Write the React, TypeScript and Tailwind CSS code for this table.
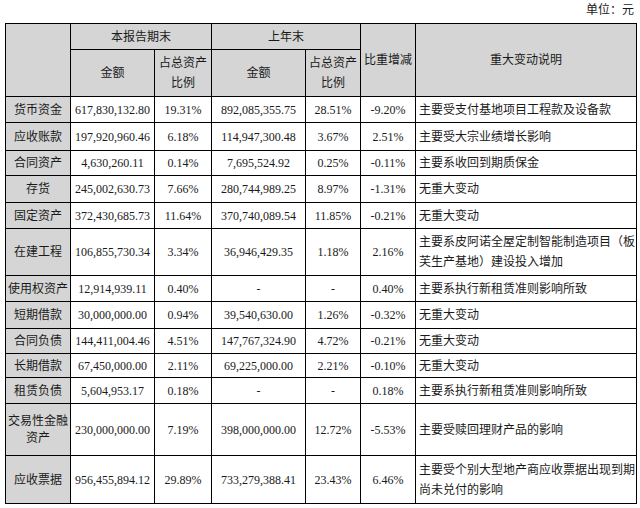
import React from "react";

type Row = { name: React.ReactNode; a: string; ap: string; b: string; bp: string; d: string; desc: React.ReactNode; h: string };

const rows: Row[] = [
  { name: "货币资金", a: "617,830,132.80", ap: "19.31%", b: "892,085,355.75", bp: "28.51%", d: "-9.20%", desc: "主要受支付基地项目工程款及设备款", h: "h-[26px]" },
  { name: "应收账款", a: "197,920,960.46", ap: "6.18%", b: "114,947,300.48", bp: "3.67%", d: "2.51%", desc: "主要受大宗业绩增长影响", h: "h-[28px]" },
  { name: "合同资产", a: "4,630,260.11", ap: "0.14%", b: "7,695,524.92", bp: "0.25%", d: "-0.11%", desc: "主要系收回到期质保金", h: "h-[25px]" },
  { name: "存货", a: "245,002,630.73", ap: "7.66%", b: "280,744,989.25", bp: "8.97%", d: "-1.31%", desc: "无重大变动", h: "h-[27px]" },
  { name: "固定资产", a: "372,430,685.73", ap: "11.64%", b: "370,740,089.54", bp: "11.85%", d: "-0.21%", desc: "无重大变动", h: "h-[26px]" },
  { name: "在建工程", a: "106,855,730.34", ap: "3.34%", b: "36,946,429.35", bp: "1.18%", d: "2.16%", desc: <>主要系皮阿诺全屋定制智能制造项目（板<br />芙生产基地）建设投入增加</>, h: "h-[47px]" },
  { name: "使用权资产", a: "12,914,939.11", ap: "0.40%", b: "-", bp: "-", d: "0.40%", desc: "主要系执行新租赁准则影响所致", h: "h-[26px]" },
  { name: "短期借款", a: "30,000,000.00", ap: "0.94%", b: "39,540,630.00", bp: "1.26%", d: "-0.32%", desc: "无重大变动", h: "h-[27px]" },
  { name: "合同负债", a: "144,411,004.46", ap: "4.51%", b: "147,767,324.90", bp: "4.72%", d: "-0.21%", desc: "无重大变动", h: "h-[25px]" },
  { name: "长期借款", a: "67,450,000.00", ap: "2.11%", b: "69,225,000.00", bp: "2.21%", d: "-0.10%", desc: "无重大变动", h: "h-[24px]" },
  { name: "租赁负债", a: "5,604,953.17", ap: "0.18%", b: "-", bp: "-", d: "0.18%", desc: "主要系执行新租赁准则影响所致", h: "h-[26px]" },
  { name: <span className="block leading-[17px]">交易性金融<br />资产</span>, a: "230,000,000.00", ap: "7.19%", b: "398,000,000.00", bp: "12.72%", d: "-5.53%", desc: "主要受赎回理财产品的影响", h: "h-[52px]" },
  { name: "应收票据", a: "956,455,894.12", ap: "29.89%", b: "733,279,388.41", bp: "23.43%", d: "6.46%", desc: <>主要受个别大型地产商应收票据出现到期<br />尚未兑付的影响</>, h: "h-[48px]" },
];

const cell = "border border-black p-0 text-center align-middle";

export default function App() {
  return (
    <div
      className="w-[640px] h-[508px] bg-white text-[12px] text-[#1a1a1a] overflow-hidden"
      style={{ fontFamily: '"Liberation Serif", "Noto Sans CJK SC", serif' }}
    >
      <div className="h-[23px] flex justify-end items-start pt-[2px] pr-[6px] leading-[16px]">单位：元</div>
      <table className="ml-[5px] w-[631px] table-fixed border-collapse">
        <colgroup>
          <col className="w-[65px]" />
          <col className="w-[84px]" />
          <col className="w-[57px]" />
          <col className="w-[94px]" />
          <col className="w-[55px]" />
          <col className="w-[55px]" />
          <col className="w-[221px]" />
        </colgroup>
        <thead>
          <tr className="h-[26px] bg-[#d5d5d5]">
            <th rowSpan={2} className={`${cell} font-normal`}></th>
            <th colSpan={2} className={`${cell} font-normal`}>本报告期末</th>
            <th colSpan={2} className={`${cell} font-normal`}>上年末</th>
            <th rowSpan={2} className={`${cell} font-normal`}>比重增减</th>
            <th rowSpan={2} className={`${cell} font-normal`}>重大变动说明</th>
          </tr>
          <tr className="h-[47px] bg-[#d5d5d5]">
            <th className={`${cell} font-normal`}>金额</th>
            <th className={`${cell} font-normal leading-[20px]`}>占总资产<br />比例</th>
            <th className={`${cell} font-normal`}>金额</th>
            <th className={`${cell} font-normal leading-[20px]`}>占总资产<br />比例</th>
          </tr>
        </thead>
        <tbody>
          {rows.map((r, i) => (
            <tr key={i} className={r.h}>
              <td className={`${cell} bg-[#d5d5d5] whitespace-nowrap`}>{r.name}</td>
              <td className={`${cell} whitespace-nowrap`}>{r.a}</td>
              <td className={cell}>{r.ap}</td>
              <td className={`${cell} whitespace-nowrap`}>{r.b}</td>
              <td className={cell}>{r.bp}</td>
              <td className={cell}>{r.d}</td>
              <td className="border border-black py-0 pl-[3px] pr-0 text-left align-middle leading-[20px] whitespace-nowrap">{r.desc}</td>
            </tr>
          ))}
        </tbody>
      </table>
    </div>
  );
}
